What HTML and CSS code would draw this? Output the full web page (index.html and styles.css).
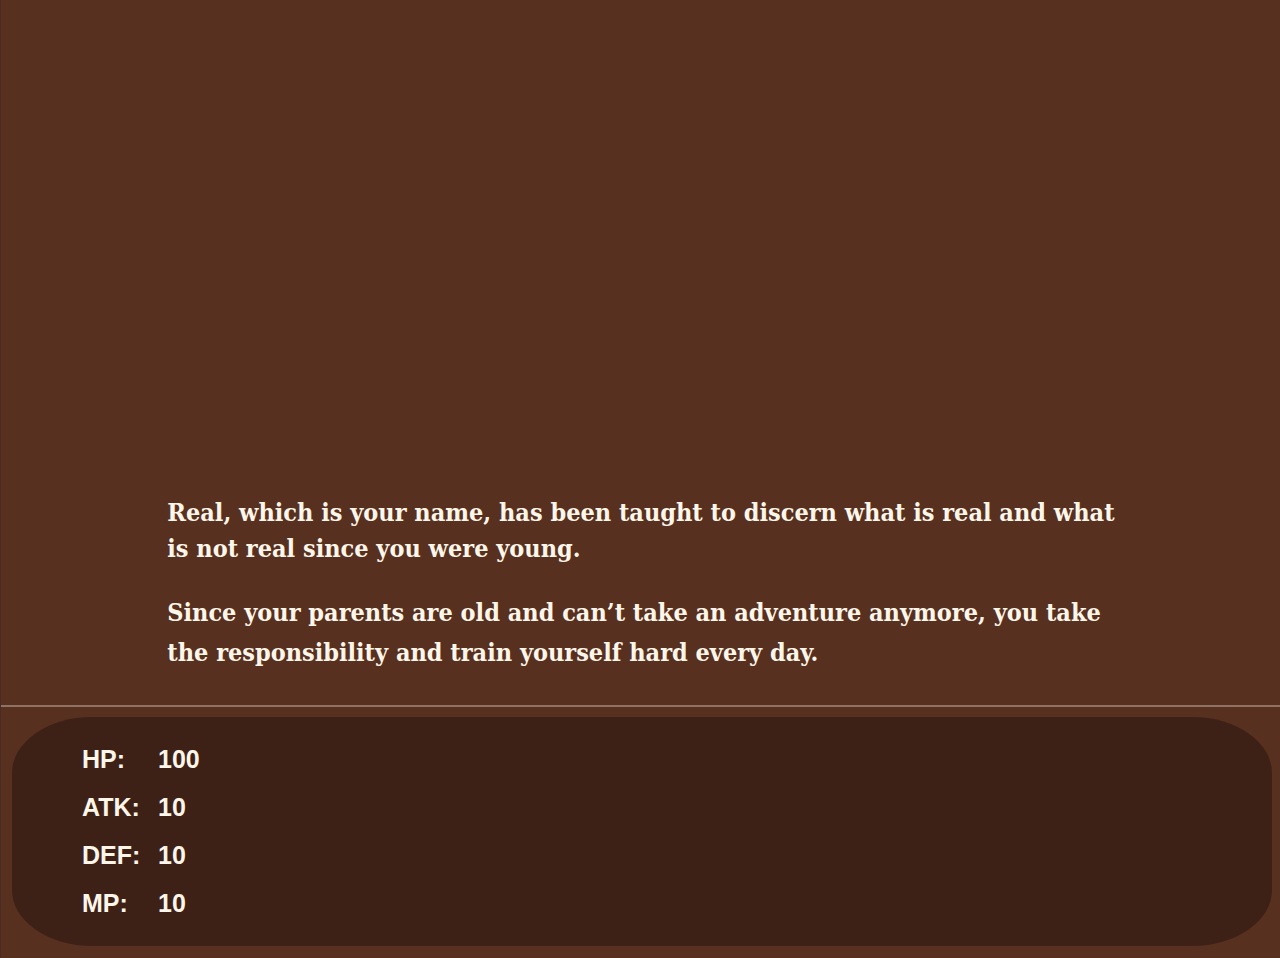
FILE: index.html
```html
<!DOCTYPE html>
<html lang="en">
<head>
    <meta charset="UTF-8">
    <meta name="viewport" content="width=device-width, initial-scale=1.0">
    <title>Real</title>
    <link rel="stylesheet" href="styles.css">
</head>
<body>
    <main class="story">
        <p class="intro">Real, which is your name, has been taught to discern what is real and what<br>
            is not real since you were young.</p>
        <p class="text">Since your parents are old and can’t take an adventure anymore, you take<br>
            the responsibility and train yourself hard every day.</p>
    </main>
    <footer class="status">
        <dl class="panel">
            <dt>HP:</dt>
            <dd>100</dd>
            <dt>ATK:</dt>
            <dd>10</dd>
            <dt>DEF:</dt>
            <dd>10</dd>
            <dt>MP:</dt>
            <dd>10</dd>
        </dl>
    </footer>
</body>
</html>
```

FILE: styles.css
```css
* {
    margin: 0;
    padding: 0;
    box-sizing: border-box;
}

body {
    min-height: 100vh;
    display: flex;
    flex-direction: column;
    background: #57301f;
    color: #fff6ea;
    border-left: 1px solid #482b22;
}

.story {
    flex: 1;
    display: flex;
    flex-direction: column;
    justify-content: flex-end;
    gap: 26px;
    padding: 32px 12px 32px 13%;
    font-family: "DejaVu Serif Condensed", "DejaVu Serif", serif;
    font-size: 25px;
    font-weight: bold;
}

.intro {
    line-height: 36px;
}

.text {
    line-height: 40px;
}

.status {
    border-top: 2px solid #8e7264;
    padding: 10px 8px 12px 11px;
}

.panel {
    display: grid;
    grid-template-columns: 76px 1fr;
    padding: 18px 70px 19px;
    background: #3d2116;
    border-radius: 80px / 56px;
    font-family: "Liberation Sans", Arial, sans-serif;
    font-size: 25px;
    font-weight: bold;
    line-height: 48px;
}
```
